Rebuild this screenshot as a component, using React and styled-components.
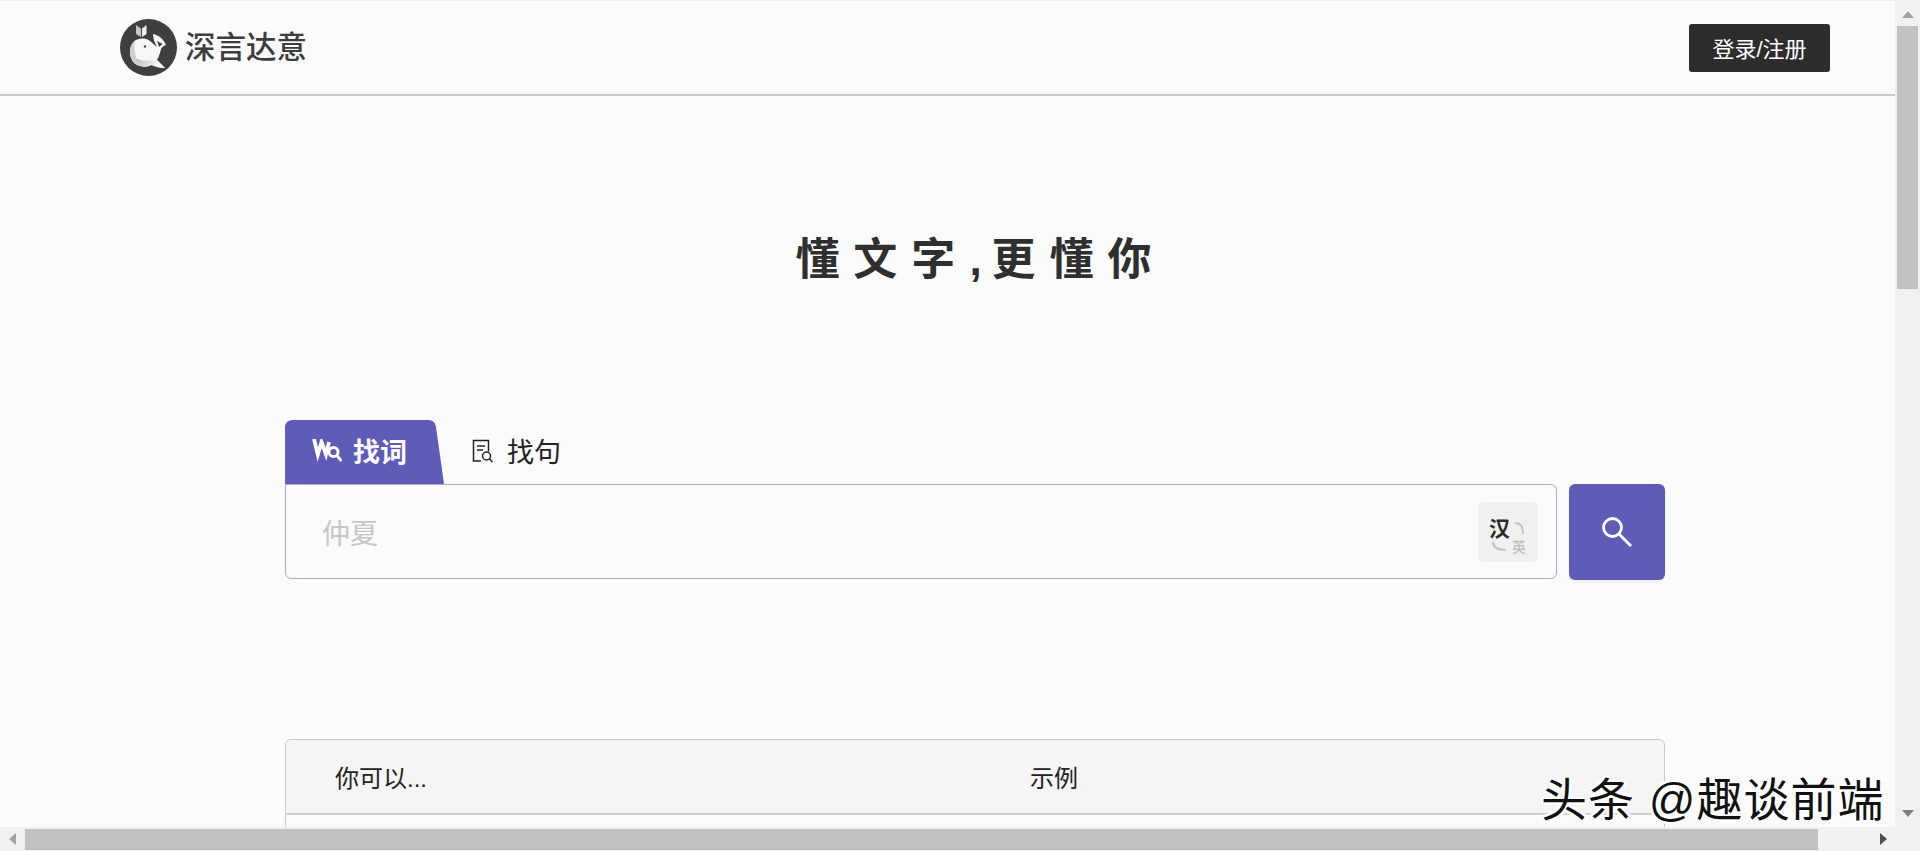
import React from "react";
import styled, { createGlobalStyle } from "styled-components";

const Global = createGlobalStyle`
  html, body { margin: 0; padding: 0; height: 100%; overflow: hidden; background: #fbfbfb; }
  #root { height: 100%; }
  * { box-sizing: border-box; }
`;

const CJK = `"Liberation Sans", "Noto Sans CJK SC", sans-serif`;

const Frame = styled.div`
  position: relative;
  display: grid;
  grid-template-columns: 1895px 25px;
  grid-template-rows: 827px 24px;
  width: 1920px;
  height: 851px;
  overflow: hidden;
  font-family: ${CJK};
  background: #fbfbfb;
`;

const Viewport = styled.main`
  overflow: hidden;
  display: flex;
  flex-direction: column;
  border-top: 1px solid #efefef;
`;

const Header = styled.header`
  flex: none;
  height: 95px;
  border-bottom: 2px solid #c9c9c9;
  padding: 0 65px 0 120px;
  display: flex;
  align-items: center;
  justify-content: space-between;
`;

const Brand = styled.div`
  display: flex;
  align-items: center;
  gap: 8px;
  font-size: 30.5px;
  line-height: 57px;
  font-weight: 500;
  color: #3d3d3d;
`;

const LoginButton = styled.button`
  width: 141px;
  height: 48px;
  margin-top: 1px;
  border: 0;
  border-radius: 3px;
  background: #2d2d2d;
  color: #fff;
  font: 22px ${CJK};
  padding: 0 0 3px;
`;

const Title = styled.h1`
  margin: 127px 0 0;
  height: 73px;
  text-align: center;
  font-size: 44px;
  line-height: 73px;
  font-weight: 700;
  letter-spacing: 14px;
  color: #2f2f2f;
  padding-left: 66px;
  white-space: nowrap;
`;

const TitleComma = styled.span`
  letter-spacing: 10px;
`;

const Search = styled.section`
  margin: 124px 0 0 285px;
  width: 1380px;
`;

const Tabs = styled.div`
  display: flex;
  align-items: stretch;
  height: 64px;
`;

const ActiveTab = styled.div`
  width: 159px;
  height: 64px;
  background: #5f5cb8;
  clip-path: path("M0 64 L0 8 Q0 0 8 0 L143 0 Q150 0 151 7 L159 64 Z");
  color: #fff;
  font-size: 27px;
  font-weight: 700;
  display: flex;
  align-items: center;
  padding: 0 0 4px 27px;
  gap: 11px;
`;

const PlainTab = styled.div`
  display: flex;
  align-items: center;
  gap: 13px;
  padding: 0 0 3px 28px;
  font-size: 27px;
  color: #222;
`;

const SearchRow = styled.div`
  display: flex;
  gap: 12px;
`;

const InputBox = styled.div`
  width: 1272px;
  height: 95px;
  border: 1px solid #aba5dc;
  border-radius: 0 6px 6px 6px;
  background: #fbfbfb;
  display: flex;
  align-items: center;
  justify-content: space-between;
  padding: 0 18px 0 36px;
`;

const Placeholder = styled.span`
  font-size: 28px;
  color: #c6c6c6;
`;

const LangToggle = styled.div`
  width: 60px;
  height: 60px;
  border-radius: 6px;
  background: #f0f0f0;
  padding: 15px 0 0 11px;
`;

const ToggleInner = styled.div`
  display: grid;
  grid-template-columns: 23px 15px;
  grid-template-rows: 22px 16px;
  align-items: start;
`;

const Han = styled.span`
  font-size: 21px;
  line-height: 23px;
  font-weight: 700;
  color: #2b2b2b;
`;

const Ying = styled.span`
  font-size: 14px;
  line-height: 16px;
  font-weight: 500;
  color: #bdbdbd;
`;

const ArcMark = styled.svg`
  margin: ${(p) => p.$margin};
  fill: none;
  stroke: #c4c4c4;
  stroke-width: 2;
`;

const SearchButton = styled.button`
  width: 96px;
  height: 96px;
  border: 0;
  padding: 0;
  border-radius: 6px;
  background: #5f5cb8;
  box-shadow: 0 2px 3px rgba(0, 0, 0, 0.05);
  display: grid;
  place-items: center;
`;

const Table = styled.section`
  margin: 159px 0 0 285px;
  width: 1380px;
  min-height: 200px;
  flex: none;
  border: 1px solid #c9c9c9;
  border-radius: 6px 6px 0 0;
`;

const TableHead = styled.div`
  height: 75px;
  background: #f5f5f5;
  border-bottom: 2px solid #cfcfcf;
  border-radius: 6px 6px 0 0;
  display: grid;
  grid-template-columns: 695px 1fr;
  align-items: center;
  padding-left: 49px;
  font-size: 24px;
  color: #222;
`;

const TrackV = styled.div`
  background: #f1f1f1;
  display: flex;
  flex-direction: column;
  align-items: center;
  padding-top: 26px;
`;

const ThumbV = styled.div`
  width: 21px;
  height: 263px;
  background: #c1c1c1;
`;

const TrackH = styled.div`
  background: #f1f1f1;
  display: flex;
  align-items: center;
  justify-content: space-between;
  padding: 0 9px 0 25px;
`;

const ThumbH = styled.div`
  width: 1793px;
  height: 21px;
  background: #c1c1c1;
`;

const Corner = styled.div`
  background: #f1f1f1;
`;

const Arrow = styled.svg`
  position: absolute;
  fill: ${(p) => p.$color || "#a3a3a3"};
`;

const Watermark = styled.div`
  position: absolute;
  left: 1541px;
  top: 775px;
  font-size: 46px;
  line-height: 50px;
  color: #111;
  white-space: nowrap;
  letter-spacing: 1px;
  text-shadow:
    -2px 0 0 #fff, 2px 0 0 #fff, 0 -2px 0 #fff, 0 2px 0 #fff,
    -2px -2px 0 #fff, 2px -2px 0 #fff, -2px 2px 0 #fff, 2px 2px 0 #fff;
`;

const WhaleLogo = () => (
  <svg width="57" height="57" viewBox="0 0 57 57">
    <defs>
      <linearGradient id="belly" x1="0" y1="0" x2="1" y2="0.3">
        <stop offset="0" stopColor="#a8a8a8" />
        <stop offset="0.6" stopColor="#dcdcdc" />
        <stop offset="1" stopColor="#fff" />
      </linearGradient>
    </defs>
    <circle cx="28.5" cy="28.5" r="28.5" fill="#3f3f3f" />
    <path d="M16 6l5 3.5V18l-5-3z" fill="#c4c4c4" />
    <path d="M26.5 6l-4.5 3.5V18l4.5-3z" fill="#efefef" />
    <path
      d="M10 33C10 24 16 18.5 24 19.5C30 20.5 33 25 37 28C35 24 33 20 33 15C39 16 44 21 46 26C43 27 42 28 41 30C40 35 38 39 37 41L45 49C39 49 35 47 31.5 46C23 50 10 47 10 33Z"
      fill="#f7f7f7"
    />
    <path
      d="M11 36C16 41 26 43 37 41L45 49C39 49 35 47 31.5 46C23 50 13 46 11 36Z"
      fill="url(#belly)"
    />
    <path d="M10 33C10 27 12 24 15 21.5C13.5 28 15 36 19 46C13 43 10 39 10 33Z" fill="#cfcfcf" />
    <circle cx="25" cy="27.5" r="1.2" fill="#444" />
    <path d="M37 22l5.5 3-3.5 3z" fill="#3f3f3f" />
  </svg>
);

const WordIcon = () => (
  <svg width="30" height="23" viewBox="0 0 30 23" fill="none" stroke="#fff">
    <path d="M2 0l3.8 15.5L9.5 3l4.5 12.5L17 3" strokeWidth="3.8" />
    <circle cx="21.5" cy="13" r="4.6" strokeWidth="3" />
    <path d="M25 16.5l4.5 5.5" strokeWidth="2.8" />
  </svg>
);

const SentenceIcon = () => (
  <svg width="22" height="24" viewBox="0 0 22 24" fill="none" stroke="#222" strokeWidth="1.5">
    <path d="M9 22H1.5V1.5h15v11" />
    <path d="M5 7h8M5 11h6" />
    <circle cx="14.5" cy="17" r="4" />
    <path d="M17.5 20l3 3" />
  </svg>
);

const SearchIcon = () => (
  <svg width="30" height="30" viewBox="0 0 30 30" fill="none" stroke="#fff" strokeWidth="2.8">
    <circle cx="10.5" cy="10.5" r="9" />
    <path d="M17 17l12 12" />
  </svg>
);

export default function App() {
  return (
    <Frame>
      <Global />
      <Viewport>
        <Header>
          <Brand>
            <WhaleLogo />
            <span>深言达意</span>
          </Brand>
          <LoginButton>登录/注册</LoginButton>
        </Header>
        <Title>
          懂文字<TitleComma>,</TitleComma>更懂你
        </Title>
        <Search>
          <Tabs>
            <ActiveTab>
              <WordIcon />
              找词
            </ActiveTab>
            <PlainTab>
              <SentenceIcon />
              找句
            </PlainTab>
          </Tabs>
          <SearchRow>
            <InputBox>
              <Placeholder>仲夏</Placeholder>
              <LangToggle>
                <ToggleInner>
                  <Han>汉</Han>
                  <ArcMark $margin="5px 0 0 2px" width="10" height="12" viewBox="0 0 10 12">
                    <path d="M1 1c5 0 8 2 8 11" />
                  </ArcMark>
                  <ArcMark $margin="3px 0 0 3px" width="15" height="9" viewBox="0 0 15 9">
                    <path d="M1 0c0 5 3 8 13 8" />
                  </ArcMark>
                  <Ying>英</Ying>
                </ToggleInner>
              </LangToggle>
            </InputBox>
            <SearchButton aria-label="搜索">
              <SearchIcon />
            </SearchButton>
          </SearchRow>
        </Search>
        <Table>
          <TableHead>
            <span>你可以...</span>
            <span>示例</span>
          </TableHead>
        </Table>
      </Viewport>
      <TrackV>
        <ThumbV />
      </TrackV>
      <TrackH>
        <ThumbH />
      </TrackH>
      <Corner />
      <Arrow width="12" height="7" viewBox="0 0 12 7" style={{ left: 1902, top: 11 }}>
        <path d="M6 0l6 7H0z" />
      </Arrow>
      <Arrow $color="#808080" width="12" height="7" viewBox="0 0 12 7" style={{ left: 1902, top: 810 }}>
        <path d="M6 7L0 0h12z" />
      </Arrow>
      <Arrow width="7" height="12" viewBox="0 0 7 12" style={{ left: 9, top: 833 }}>
        <path d="M0 6l7-6v12z" />
      </Arrow>
      <Arrow $color="#505050" width="7" height="12" viewBox="0 0 7 12" style={{ left: 1880, top: 833 }}>
        <path d="M7 6L0 0v12z" />
      </Arrow>
      <Watermark>头条 @趣谈前端</Watermark>
    </Frame>
  );
}
